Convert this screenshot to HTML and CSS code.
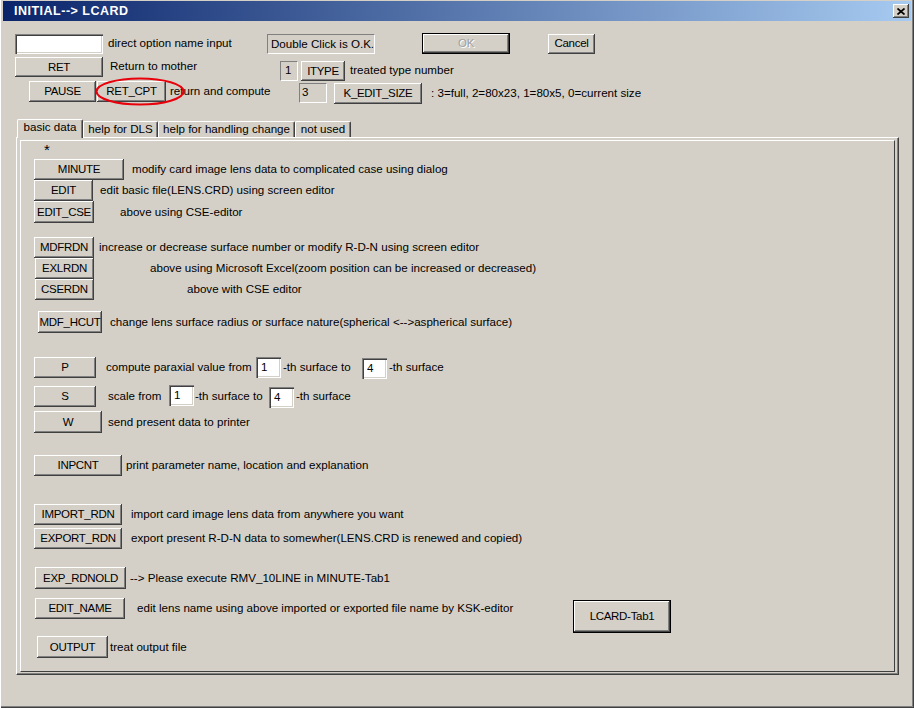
FILE: index.html
```html
<!DOCTYPE html>
<html lang="en">
<head>
    <meta charset="UTF-8">
    <title>INITIAL--&gt; LCARD</title>
    <link rel="stylesheet" href="styles.css">
</head>
<body>
    <div class="window">
        <div class="titlebar">
            <span class="title">INITIAL--&gt; LCARD</span>
            <button class="close-btn" type="button">
                <svg width="8" height="7" viewBox="0 0 8 7"><path d="M0.5 0.5L7.5 6.5M7.5 0.5L0.5 6.5" stroke="#000" stroke-width="1.7"/></svg>
            </button>
        </div>

        <div class="dialog-body">
            <!-- top controls -->
            <div class="top-row row-1">
                <input class="field name-field" type="text">
                <span class="lbl lbl-option">direct option name input</span>
                <div class="static-box">Double Click is O.K.</div>
                <button class="btn btn-default btn-ok" type="button" disabled>OK</button>
                <button class="btn btn-cancel" type="button">Cancel</button>
            </div>
            <div class="top-row row-2">
                <button class="btn btn-ret" type="button">RET</button>
                <span class="lbl lbl-ret">Return to mother</span>
                <div class="num-box num-itype">1</div>
                <button class="btn btn-itype" type="button">ITYPE</button>
                <span class="lbl lbl-itype">treated type number</span>
            </div>
            <div class="top-row row-3">
                <button class="btn btn-pause" type="button">PAUSE</button>
                <button class="btn btn-retcpt" type="button">RET_CPT</button>
                <span class="lbl lbl-compute">return and compute</span>
                <div class="num-box num-size">3</div>
                <button class="btn btn-ksize" type="button">K_EDIT_SIZE</button>
                <span class="lbl lbl-size">: 3=full, 2=80x23, 1=80x5, 0=current size</span>
                <!-- red marking drawn over RET_CPT -->
                <svg class="ring" width="90" height="29" viewBox="0 0 90 29">
                    <ellipse cx="45" cy="14.5" rx="43.5" ry="13" fill="none" stroke="#e8000b" stroke-width="2.2"/>
                </svg>
            </div>

            <!-- tabs -->
            <div class="tabs">
                <div class="tab tab-active tab-basic">basic data</div>
                <div class="tab tab-dls">help for DLS</div>
                <div class="tab tab-handling">help for handling change</div>
                <div class="tab tab-unused">not used</div>
            </div>
            <div class="tab-panel">
                <div class="tab-frame">
                    <div class="row row-star"><span class="star">*</span></div>

                    <div class="row">
                        <button class="btn w-90" type="button">MINUTE</button>
                        <span class="lbl ml-8">modify card image lens data to complicated case using dialog</span>
                    </div>
                    <div class="row">
                        <button class="btn w-59" type="button">EDIT</button>
                        <span class="lbl ml-7">edit basic file(LENS.CRD) using screen editor</span>
                    </div>
                    <div class="row h-22">
                        <button class="btn w-60 h-22" type="button">EDIT_CSE</button>
                        <span class="lbl ml-26">above using CSE-editor</span>
                    </div>

                    <div class="row mt-14">
                        <button class="btn w-60" type="button">MDFRDN</button>
                        <span class="lbl ml-5">increase or decrease surface number or modify R-D-N using screen editor</span>
                    </div>
                    <div class="row pl-14">
                        <button class="btn w-59" type="button">EXLRDN</button>
                        <span class="lbl ml-56">above using Microsoft Excel(zoom position can be increased or decreased)</span>
                    </div>
                    <div class="row pl-14">
                        <button class="btn w-59" type="button">CSERDN</button>
                        <span class="lbl ml-93">above with CSE editor</span>
                    </div>

                    <div class="row h-22 mt-11 pl-17">
                        <button class="btn w-64 h-22" type="button">MDF_HCUT</button>
                        <span class="lbl ml-8">change lens surface radius or surface nature(spherical &lt;--&gt;aspherical surface)</span>
                    </div>

                    <div class="row mt-24">
                        <button class="btn w-62" type="button">P</button>
                        <span class="lbl ml-10 lbl-paraxial">compute paraxial value from</span>
                        <input class="field small-field" type="text" value="1">
                        <span class="lbl ml-2 lbl-to">-th surface to</span>
                        <input class="field small-field down-1" type="text" value="4">
                        <span class="lbl ml-2">-th surface</span>
                    </div>
                    <div class="row mt-8">
                        <button class="btn w-62" type="button">S</button>
                        <span class="lbl ml-12 lbl-scale">scale from</span>
                        <input class="field small-field up-1" type="text" value="1">
                        <span class="lbl ml-1 lbl-to-short">-th surface to</span>
                        <input class="field small-field down-1" type="text" value="4">
                        <span class="lbl ml-2">-th surface</span>
                    </div>
                    <div class="row h-22 mt-4">
                        <button class="btn w-68 h-22" type="button">W</button>
                        <span class="lbl ml-6">send present data to printer</span>
                    </div>

                    <div class="row mt-22">
                        <button class="btn w-88" type="button">INPCNT</button>
                        <span class="lbl ml-4">print parameter name, location and explanation</span>
                    </div>

                    <div class="row mt-28">
                        <button class="btn w-88" type="button">IMPORT_RDN</button>
                        <span class="lbl ml-9">import card image lens data from anywhere you want</span>
                    </div>
                    <div class="row mt-3">
                        <button class="btn w-88" type="button">EXPORT_RDN</button>
                        <span class="lbl ml-9">export present R-D-N data to somewher(LENS.CRD is renewed and copied)</span>
                    </div>

                    <div class="row h-22 mt-18 pl-14">
                        <button class="btn w-91 h-22" type="button">EXP_RDNOLD</button>
                        <span class="lbl ml-4">--&gt; Please execute RMV_10LINE in MINUTE-Tab1</span>
                    </div>
                    <div class="row mt-9 pl-14">
                        <button class="btn w-90" type="button">EDIT_NAME</button>
                        <span class="lbl ml-12 lbl-editname">edit lens name using above imported or exported file name by KSK-editor</span>
                        <button class="btn btn-default btn-lcard" type="button">LCARD-Tab1</button>
                    </div>

                    <div class="row h-22 mt-17 pl-16">
                        <button class="btn w-71 h-22" type="button">OUTPUT</button>
                        <span class="lbl ml-2">treat output file</span>
                    </div>
                </div>
            </div>
        </div>
    </div>
</body>
</html>
```

FILE: styles.css
```css
* {
    margin: 0;
    padding: 0;
    box-sizing: border-box;
}

body {
    font-family: "Liberation Sans", Arial, sans-serif;
    font-size: 11.6px;
    color: #000;
    background: #d4d0c8;
}

.window {
    width: 914px;
    height: 708px;
    background: #d4d0c8;
    padding: 1px 3px 0 3px;
    box-shadow: inset 1px 0 #fff, inset -1px -1px #404040, inset -2px -2px #808080;
}

/* title bar */
.titlebar {
    height: 20px;
    display: flex;
    align-items: center;
    padding-left: 11px;
    background: linear-gradient(to right, #0a246a, #a6caf0);
}

.title {
    color: #fff;
    font-weight: bold;
    font-size: 12.5px;
    letter-spacing: 0.5px;
}

.close-btn {
    margin-left: auto;
    margin-right: 2px;
    width: 16px;
    height: 14px;
    border: none;
    background: #d4d0c8;
    display: flex;
    align-items: center;
    justify-content: center;
    box-shadow: inset -1px -1px #404040, inset 1px 1px #fff, inset -2px -2px #808080;
}

.dialog-body {
    padding: 12px 0 0 12px;
}

/* generic controls */
.btn {
    font-family: inherit;
    font-size: 11.5px;
    letter-spacing: -0.3px;
    color: #000;
    height: 21px;
    border: none;
    background: #d4d0c8;
    text-align: center;
    padding: 0 0 1px 0;
    flex-shrink: 0;
    box-shadow: inset -1px -1px #404040, inset 1px 1px #fff, inset -2px -2px #808080, inset 2px 2px #d4d0c8;
}

.btn-default {
    border: 1px solid #000;
}

.btn:disabled {
    color: #a0a0a0;
    text-shadow: 1px 1px #fff;
}

.field {
    font-family: inherit;
    font-size: 11.6px;
    height: 20px;
    background: #fff;
    border: none;
    outline: none;
    flex-shrink: 0;
    box-shadow: inset 1px 1px #808080, inset 2px 2px #404040, inset -1px -1px #fff, inset -2px -2px #d4d0c8;
}

.lbl {
    white-space: nowrap;
    flex-shrink: 0;
    padding-bottom: 2px;
}

.num-box {
    height: 20px;
    padding: 0 0 0 4px;
    line-height: 16px;
    border: 1px solid;
    border-color: #808080 #fff #fff #808080;
    flex-shrink: 0;
}

.static-box {
    width: 108px;
    height: 20px;
    padding-left: 3px;
    line-height: 17px;
    border: 1px solid;
    border-color: #808080 #fff #fff #808080;
    white-space: nowrap;
}

/* top area */
.top-row {
    display: flex;
}

.row-1 {
    height: 21px;
    align-items: center;
}

.name-field {
    width: 88px;
}

.lbl-option {
    margin-left: 5px;
    width: 159px;
}

.btn-ok {
    margin-left: 47px;
    width: 88px;
}

.btn-cancel {
    margin-left: 38px;
    width: 47px;
    height: 20px;
}

.row-2 {
    margin-top: 3px;
    height: 24px;
    align-items: flex-start;
}

.row-2 .lbl {
    line-height: 18px;
}

.btn-ret {
    width: 88px;
    height: 20px;
}

.lbl-ret {
    margin-left: 7px;
    width: 170px;
}

.num-itype {
    width: 18px;
    margin-top: 4px;
}

.btn-itype {
    margin-left: 3px;
    margin-top: 4px;
    width: 44px;
    height: 20px;
}

.lbl-itype {
    margin-left: 5px;
    margin-top: 4px;
}

.row-3 {
    height: 22px;
    align-items: flex-start;
    position: relative;
}

.row-3 .lbl {
    line-height: 19px;
}

.btn-pause {
    margin-left: 14px;
    width: 67px;
}

.btn-retcpt {
    margin-left: 1px;
    width: 69px;
}

.ring {
    position: absolute;
    left: 80px;
    top: -4px;
}

.lbl-compute {
    margin-left: 4px;
    width: 129px;
}

.num-size {
    width: 28px;
    margin-top: 2px;
    padding-left: 2px;
}

.btn-ksize {
    margin-left: 7px;
    margin-top: 2px;
    width: 88px;
}

.lbl-size {
    margin-left: 9px;
    margin-top: 2px;
}

/* tabs */
.tabs {
    display: flex;
    align-items: flex-end;
    height: 18px;
    margin-top: 16px;
    margin-left: 2px;
}

.tab {
    height: 16px;
    line-height: 14px;
    text-align: center;
    white-space: nowrap;
    border-top: 1px solid #fff;
    border-left: 1px solid #fff;
    border-right: 1px solid #404040;
    border-radius: 2px 2px 0 0;
    box-shadow: inset -1px 0 #808080;
}

.tab-active {
    height: 19px;
    line-height: 14px;
    margin-bottom: -1px;
    position: relative;
    z-index: 1;
    background: #d4d0c8;
}

.tab-basic { width: 66px; }
.tab-dls { width: 75px; }
.tab-handling { width: 137px; }
.tab-unused { width: 56px; }

.tab-panel {
    margin-left: 1px;
    width: 883px;
    height: 538px;
    padding: 2px 3px 2px 3px;
    border-top: 1px solid #fff;
    border-left: 1px solid #fff;
    border-right: 1px solid #404040;
    border-bottom: 1px solid #404040;
    box-shadow: inset -1px -1px #808080;
}

.tab-frame {
    height: 100%;
    border: 1px solid;
    border-color: #fff #404040 #404040 #fff;
}

/* rows inside the tab */
.row {
    display: flex;
    align-items: center;
    height: 21px;
    padding-left: 13px;
}

.row-star {
    height: 18px;
    padding-left: 23px;
    align-items: flex-start;
}

.star {
    font-size: 15px;
    line-height: 16px;
    padding-top: 1px;
}

.small-field {
    width: 25px;
    height: 21px;
    padding: 0 0 3px 5px;
}

.up-1 { position: relative; top: -1px; }
.down-1 { position: relative; top: 1px; }

.lbl-paraxial { width: 150px; }
.lbl-to { width: 79px; }
.lbl-scale { width: 61px; }
.lbl-to-short { width: 74px; }
.lbl-editname { width: 436px; }

.btn-lcard {
    width: 98px;
    height: 33px;
    align-self: flex-start;
    margin-top: 2px;
}

.h-22 { height: 22px; }

.w-59 { width: 59px; }
.w-60 { width: 60px; }
.w-62 { width: 62px; }
.w-64 { width: 64px; }
.w-68 { width: 68px; }
.w-71 { width: 71px; }
.w-88 { width: 88px; }
.w-90 { width: 90px; }
.w-91 { width: 91px; }

.ml-1 { margin-left: 1px; }
.ml-2 { margin-left: 2px; }
.ml-4 { margin-left: 4px; }
.ml-5 { margin-left: 5px; }
.ml-6 { margin-left: 6px; }
.ml-7 { margin-left: 7px; }
.ml-8 { margin-left: 8px; }
.ml-9 { margin-left: 9px; }
.ml-10 { margin-left: 10px; }
.ml-12 { margin-left: 12px; }
.ml-26 { margin-left: 26px; }
.ml-56 { margin-left: 56px; }
.ml-93 { margin-left: 93px; }

.mt-3 { margin-top: 3px; }
.mt-4 { margin-top: 4px; }
.mt-8 { margin-top: 8px; }
.mt-9 { margin-top: 9px; }
.mt-11 { margin-top: 11px; }
.mt-14 { margin-top: 14px; }
.mt-17 { margin-top: 17px; }
.mt-18 { margin-top: 18px; }
.mt-22 { margin-top: 22px; }
.mt-24 { margin-top: 24px; }
.mt-28 { margin-top: 28px; }

.pl-14 { padding-left: 14px; }
.pl-16 { padding-left: 16px; }
.pl-17 { padding-left: 17px; }
```
